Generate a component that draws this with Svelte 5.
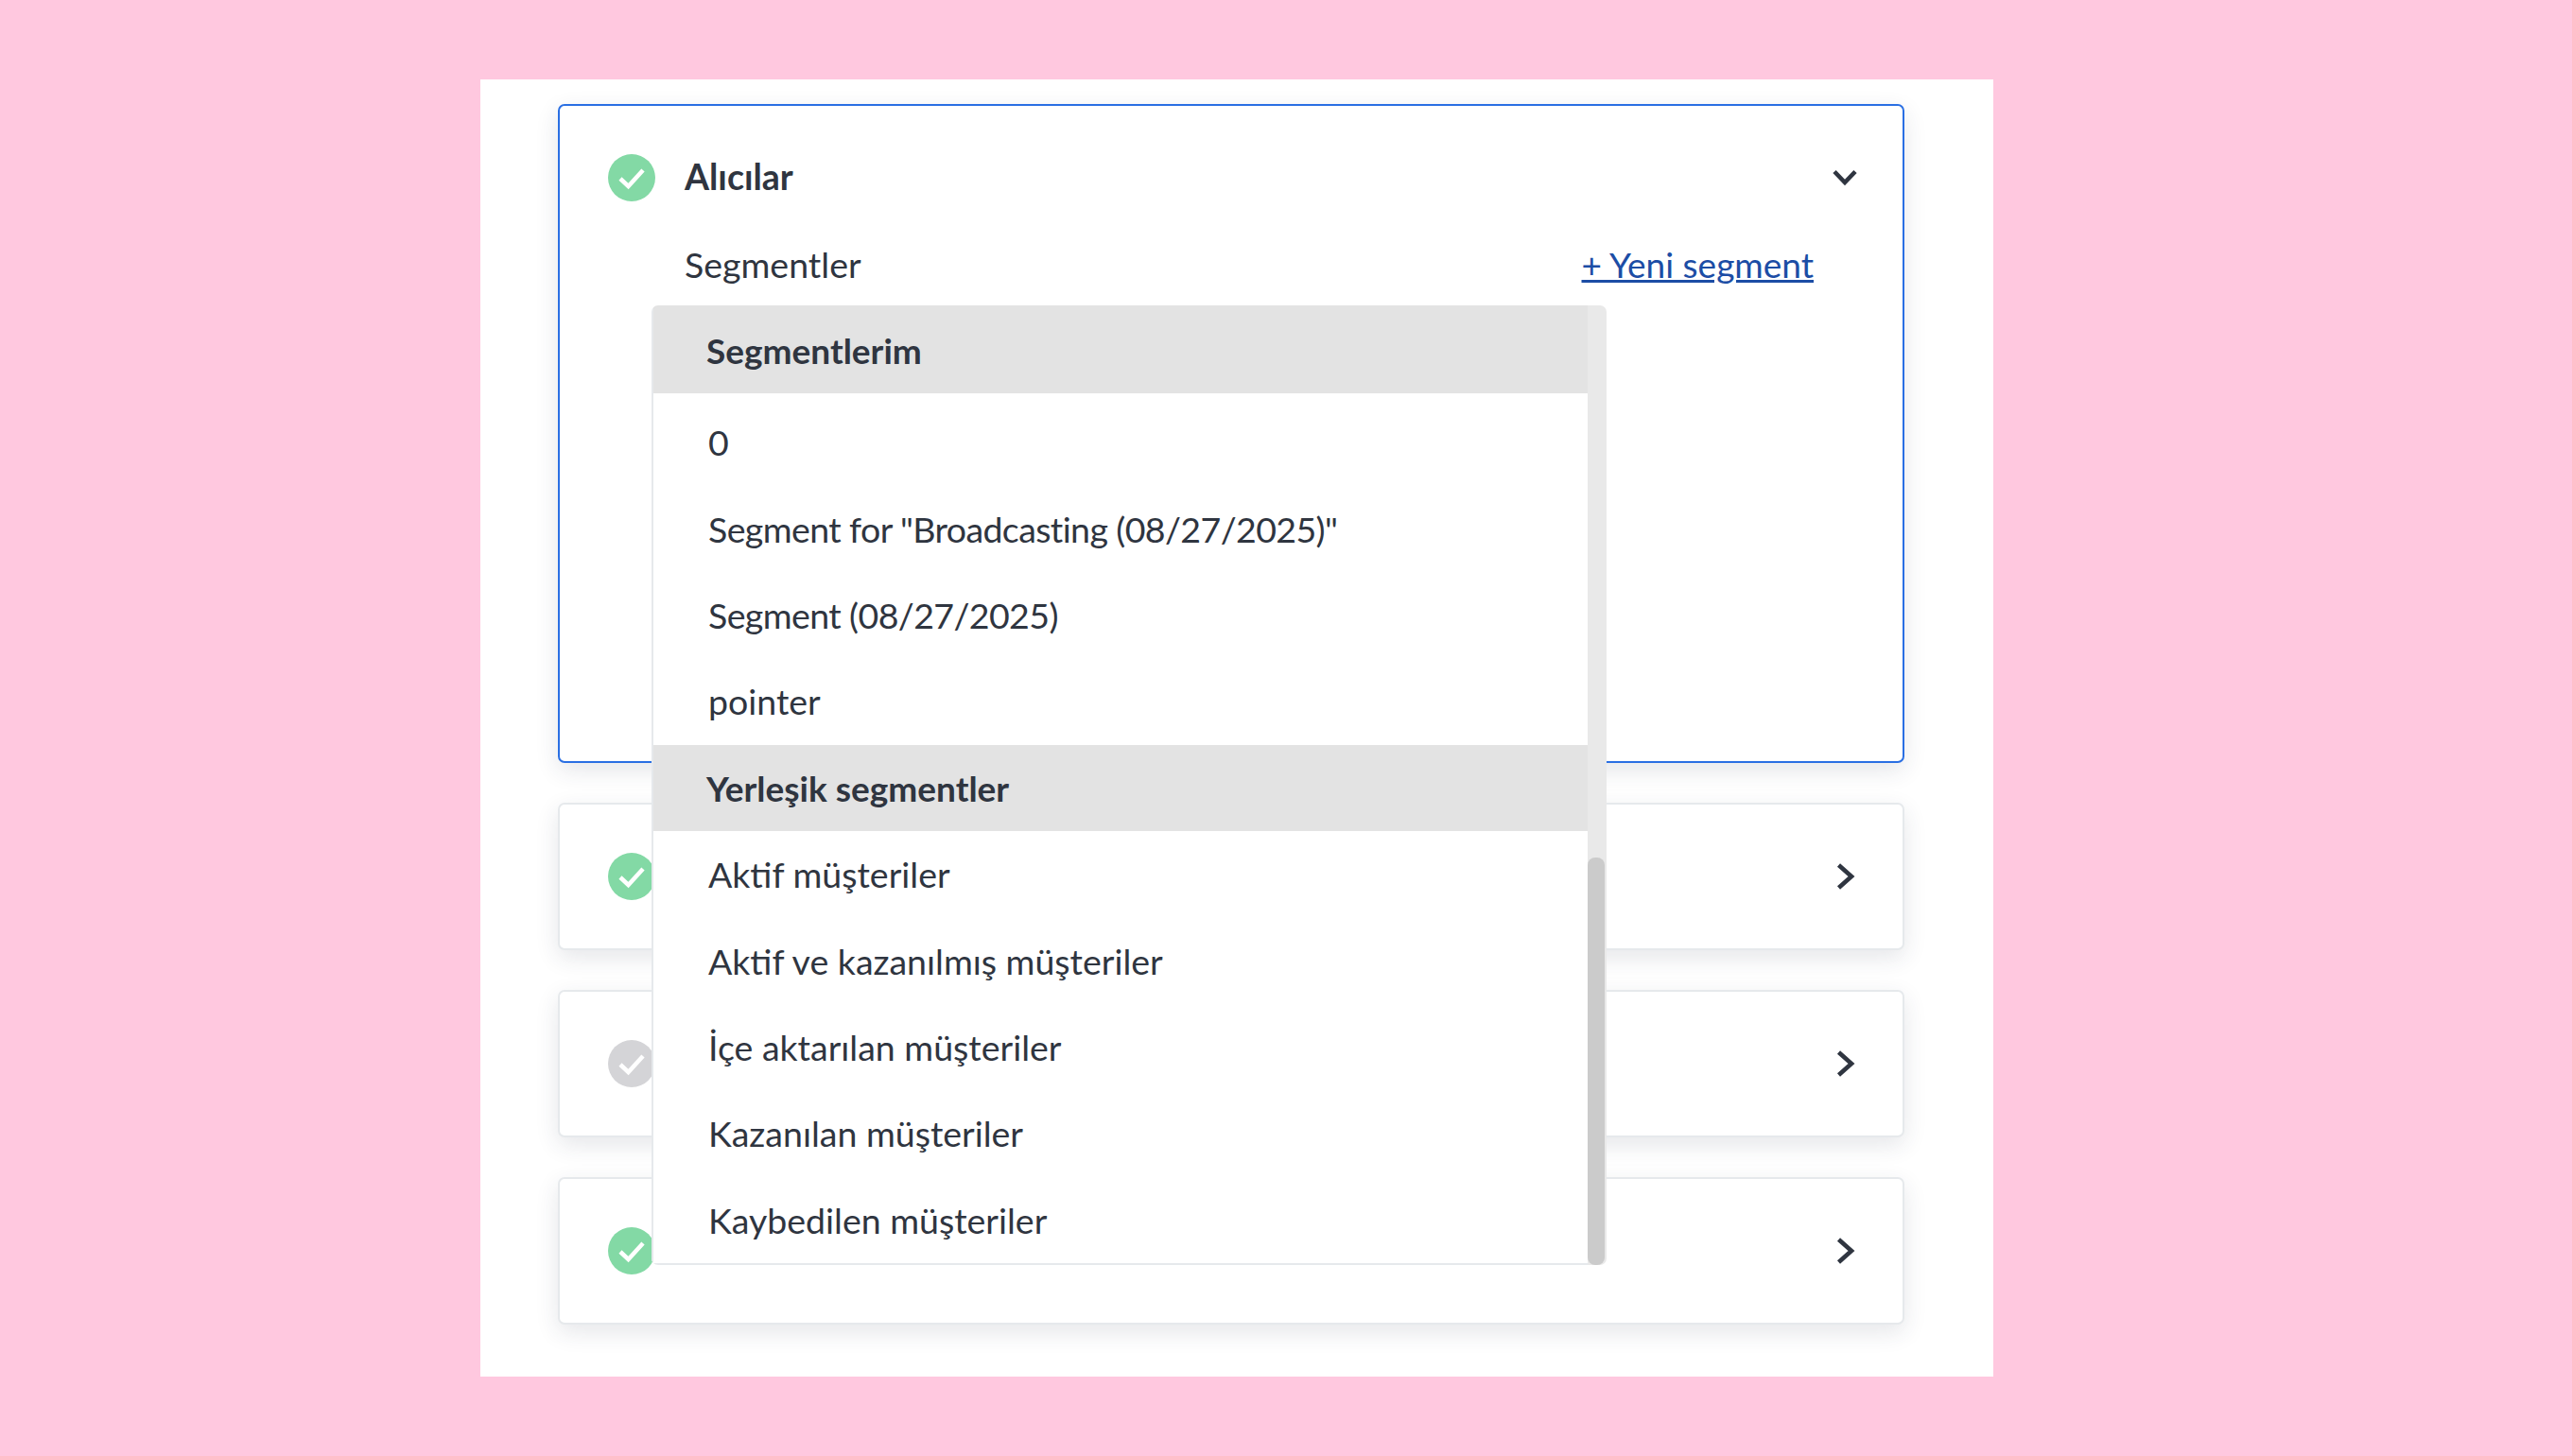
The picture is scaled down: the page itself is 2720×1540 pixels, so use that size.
<script>
  const steps = [
    { tone: 'done', open: true, title: 'Alıcılar' },
    { tone: 'done' },
    { tone: 'idle' },
    { tone: 'done' },
  ]

  const groups = [
    {
      label: 'Segmentlerim',
      items: ['0', 'Segment for "Broadcasting (08/27/2025)"', 'Segment (08/27/2025)', 'pointer'],
    },
    {
      label: 'Yerleşik segmentler',
      items: [
        'Aktif müşteriler',
        'Aktif ve kazanılmış müşteriler',
        'İçe aktarılan müşteriler',
        'Kazanılan müşteriler',
        'Kaybedilen müşteriler',
      ],
    },
  ]

  const hasDate = (item) => item.includes('/')
</script>

<div class="page">
  <main class="panel">
    {#each steps as step}
      <section class="card" class:open={step.open}>
        <header class="card__head">
          <span class="badge badge--{step.tone}">
            <svg viewBox="0 0 50 50" width="50" height="50" aria-hidden="true">
              <path d="M13 26 L21.5 34 L37 17" fill="none" stroke="#fff" stroke-width="4.5" />
            </svg>
          </span>
          {#if step.title}<h2 class="card__title">{step.title}</h2>{/if}
          <svg class="chevron" viewBox="0 0 30 30" width="30" height="30" aria-hidden="true">
            {#if step.open}
              <path d="M4 8.5 L15 20 L26 8.5" fill="none" stroke="currentColor" stroke-width="4.6" />
            {:else}
              <path d="M8.5 3 L22 15 L8.5 27" fill="none" stroke="currentColor" stroke-width="4.6" />
            {/if}
          </svg>
        </header>

        {#if step.open}
          <div class="field">
            <span class="field__label">Segmentler</span>
            <a class="field__link" href="#new">+ Yeni segment</a>
          </div>

          <div class="dropdown">
            <ul class="dropdown__list">
              {#each groups as group}
                <li class="dropdown__group">{group.label}</li>
                {#each group.items as item}
                  <li class="dropdown__item" class:dated={hasDate(item)}>{item}</li>
                {/each}
              {/each}
            </ul>
            <div class="dropdown__track"><div class="dropdown__thumb"></div></div>
          </div>
        {/if}
      </section>
    {/each}
  </main>
</div>

<style>
  :global(body) {
    margin: 0;
    background: #ffc8df;
  }

  .page {
    padding: 84px 0 0 508px;
    font-family: "Lato", "Noto Sans", sans-serif;
    color: #2f3540;
  }

  .panel {
    box-sizing: border-box;
    width: 1600px;
    height: 1372px;
    padding: 26px 94px 0 82px;
    display: flex;
    flex-direction: column;
    gap: 42px;
    background: #fff;
  }

  .card {
    position: relative;
    box-sizing: border-box;
    height: 156px;
    border: 2px solid #e6e9ec;
    border-radius: 7px;
    background: #fff;
    box-shadow: 0 8px 24px rgba(40, 50, 70, 0.12);
  }

  .card.open {
    height: 697px;
    border-color: #2a6fe3;
  }

  .card__head {
    display: flex;
    align-items: center;
    height: 152px;
    padding: 0 46px 0 51px;
  }

  .badge {
    display: flex;
    flex: none;
    width: 50px;
    height: 50px;
    border-radius: 50%;
  }

  .badge--done {
    background: #83d9a5;
  }

  .badge--idle {
    background: #d4d4d7;
  }

  .card__title {
    margin: -3px 0 0 31px;
    font-size: 37.5px;
    line-height: 48px;
    font-weight: 700;
  }

  .chevron {
    margin-left: auto;
    color: #2f3540;
  }

  .field {
    display: flex;
    justify-content: space-between;
    align-items: baseline;
    margin-top: -8px;
    padding: 0 94px 0 132px;
    font-size: 37.5px;
    line-height: 48px;
  }

  .field__link {
    color: #1c4da5;
    font-size: 37px;
    text-decoration: underline;
    text-decoration-thickness: 3px;
  }

  .dropdown {
    position: absolute;
    top: 211px;
    left: 97px;
    z-index: 2;
    display: flex;
    width: 1010px;
    height: 1015px;
    box-sizing: border-box;
    border-radius: 7px;
    background: #fff;
    overflow: hidden;
  }

  .dropdown__list {
    flex: none;
    box-sizing: border-box;
    width: 990px;
    margin: 0;
    padding: 0;
    list-style: none;
    border-left: 2px solid #e6e9ec;
    border-bottom: 2px solid #e6e9ec;
    font-size: 37.5px;
  }

  .dropdown__group {
    display: flex;
    align-items: center;
    height: 91.4px;
    padding-left: 56px;
    background: #e3e3e3;
    font-size: 37px;
    font-weight: 700;
  }

  .dropdown__group:first-child {
    box-sizing: border-box;
    height: 93px;
    margin-bottom: 6px;
    padding-top: 2px;
  }

  .dropdown__item {
    display: flex;
    align-items: center;
    height: 91.4px;
    padding-left: 58px;
  }

  .dropdown__item.dated {
    letter-spacing: -0.6px;
  }

  .dropdown__track {
    position: relative;
    flex: none;
    width: 20px;
    background: #e9e9e9;
  }

  .dropdown__thumb {
    position: absolute;
    top: 584px;
    bottom: 0;
    left: 0;
    width: 18px;
    border-radius: 8px;
    background: #cbcbcb;
  }
</style>
